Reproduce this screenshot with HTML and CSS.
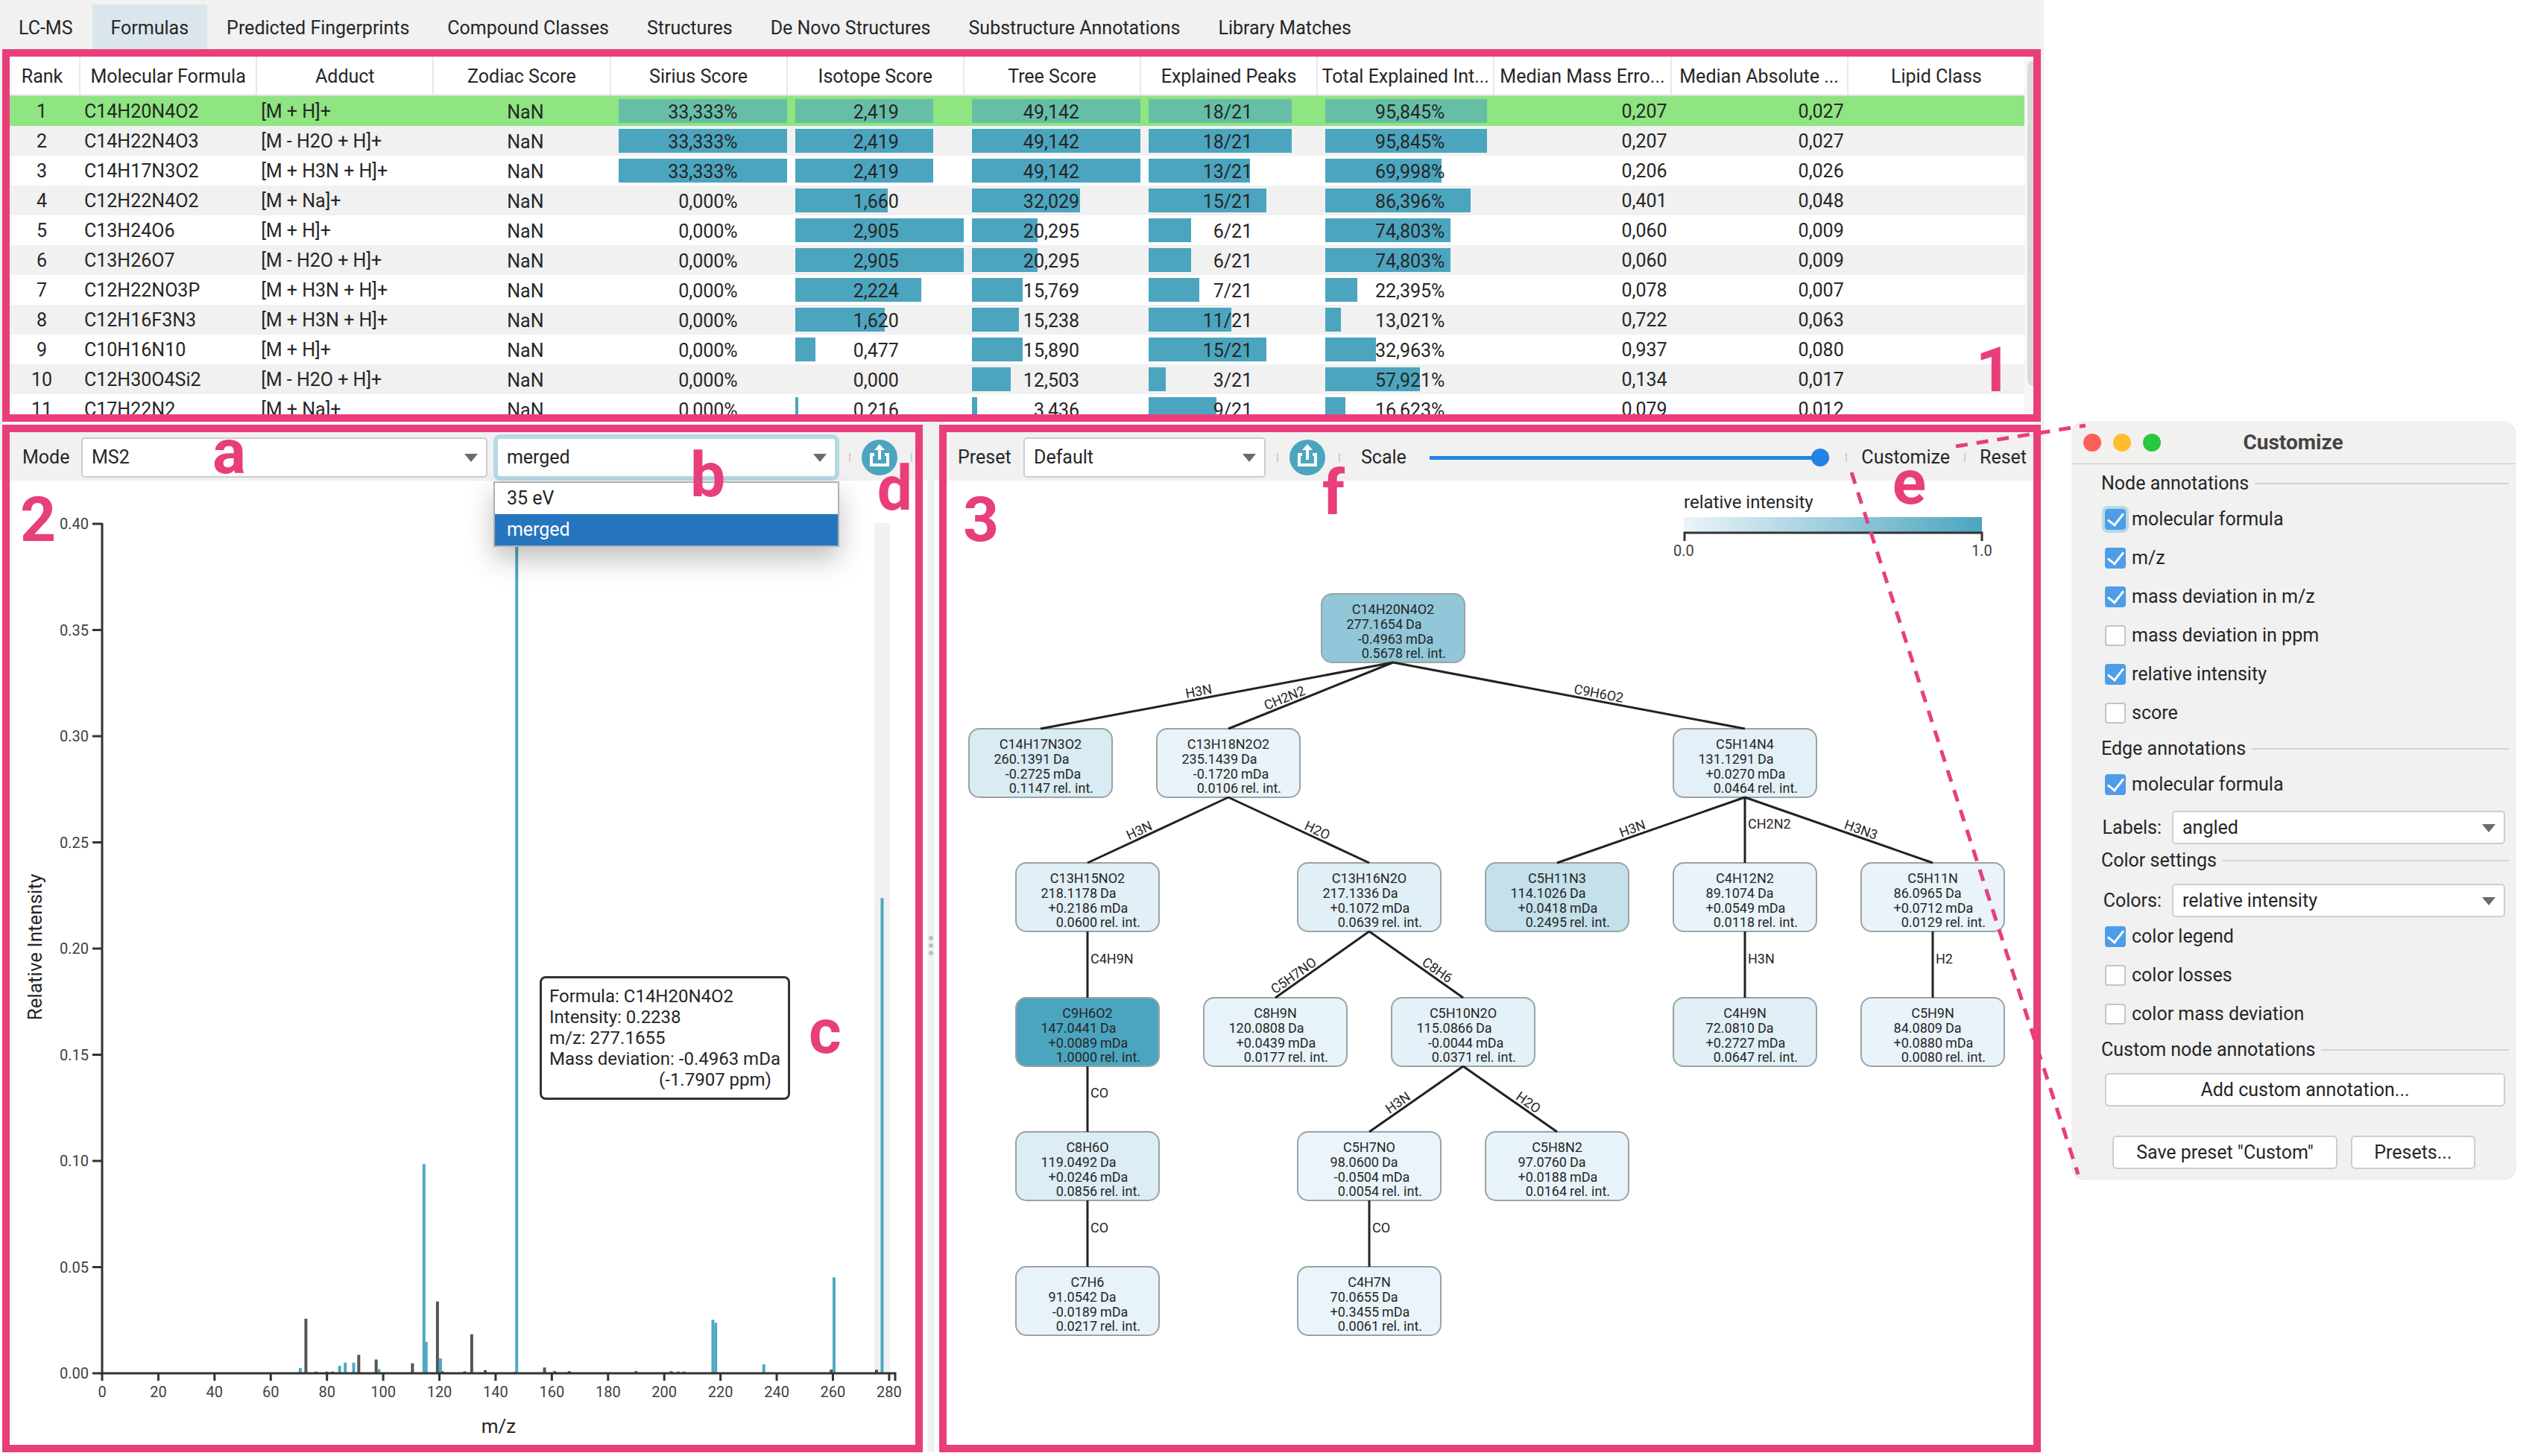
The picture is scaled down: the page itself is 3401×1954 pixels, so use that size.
FILE: index.html
```html
<!DOCTYPE html>
<html lang="en">
<head>
<meta charset="utf-8">
<title>Formulas</title>
<link rel="stylesheet" href="styles.css">
</head>
<body>
<div class="stage">
  <main class="app">
    <nav class="tabs">
      <button class="tab">LC-MS</button>
      <button class="tab tab-active">Formulas</button>
      <button class="tab">Predicted Fingerprints</button>
      <button class="tab">Compound Classes</button>
      <button class="tab">Structures</button>
      <button class="tab">De Novo Structures</button>
      <button class="tab">Substructure Annotations</button>
      <button class="tab">Library Matches</button>
    </nav>

    <section class="panel panel-table">
      <table class="formulas">
        <thead>
          <tr>
            <th class="col-rank">Rank</th><th>Molecular Formula</th><th>Adduct</th><th>Zodiac Score</th>
            <th>Sirius Score</th><th>Isotope Score</th><th>Tree Score</th><th>Explained Peaks</th>
            <th>Total Explained Int...</th><th>Median Mass Erro...</th><th>Median Absolute ...</th><th>Lipid Class</th>
          </tr>
        </thead>
        <tbody id="rows"></tbody>
      </table>
      <div class="scroll"><div class="scroll-thumb"></div></div>
      <span class="mark mark-1">1</span>
    </section>

    <div class="lower">
      <section class="panel">
        <div class="toolbar">
          <label for="mode">Mode</label>
          <span class="select select-mode"><select id="mode"><option>MS2</option></select></span>
          <span class="select select-energy">
            <select id="energy" aria-label="Collision energy"><option>merged</option><option>35 eV</option></select>
            <ul class="menu">
              <li>35 eV</li>
              <li class="menu-active">merged</li>
            </ul>
          </span>
          <span class="sep"></span>
          <button class="share" aria-label="Export spectrum">
            <svg viewBox="0 0 48 48"><circle cx="24" cy="24" r="24" fill="#4ca5bf"/><path d="M17 20H13V34H35V20H31M24 12V27" fill="none" stroke="#fff" stroke-width="4"/><path d="M24 6L31 14H17Z" fill="#fff"/></svg>
          </button>
          <span class="sep"></span>
        </div>
        <div class="plot">
          <svg id="spectrum" viewBox="0 0 1215 1294" role="img" aria-label="Mass spectrum"></svg>
          <div class="tip">Formula: C14H20N4O2<br>Intensity: 0.2238<br>m/z: 277.1655<br>Mass deviation: -0.4963 mDa<span class="tip-ppm">(-1.7907 ppm)</span></div>
        </div>
        <span class="mark mark-2">2</span>
        <span class="mark mark-a">a</span>
        <span class="mark mark-b">b</span>
        <span class="mark mark-c">c</span>
        <span class="mark mark-d">d</span>
      </section>

      <div class="divider"><i></i><i></i><i></i></div>

      <section class="panel">
        <div class="toolbar toolbar-tree">
          <label for="preset">Preset</label>
          <span class="select select-preset"><select id="preset"><option>Default</option></select></span>
          <span class="sep"></span>
          <button class="share" aria-label="Export tree">
            <svg viewBox="0 0 48 48"><circle cx="24" cy="24" r="24" fill="#4ca5bf"/><path d="M17 20H13V34H35V20H31M24 12V27" fill="none" stroke="#fff" stroke-width="4"/><path d="M24 6L31 14H17Z" fill="#fff"/></svg>
          </button>
          <span class="sep"></span>
          <label class="scale-label" for="scale">Scale</label>
          <input class="scale" id="scale" type="range" min="0" max="100" value="100">
          <span class="sep"></span>
          <button class="text-button">Customize</button>
          <span class="sep"></span>
          <button class="text-button">Reset</button>
        </div>
        <svg id="tree" viewBox="0 0 1458 1294" role="img" aria-label="Fragmentation tree"></svg>
        <span class="mark mark-3">3</span>
        <span class="mark mark-f">f</span>
        <span class="mark mark-e">e</span>
      </section>
    </div>
  </main>

  <aside class="dialog">
    <header class="titlebar">
      <span class="light light-close"></span><span class="light light-min"></span><span class="light light-max"></span>
      <h1>Customize</h1>
    </header>
    <div class="form">
      <h2>Node annotations</h2>
      <label class="check"><input class="focused" type="checkbox" checked>molecular formula</label>
      <label class="check"><input type="checkbox" checked>m/z</label>
      <label class="check"><input type="checkbox" checked>mass deviation in m/z</label>
      <label class="check"><input type="checkbox">mass deviation in ppm</label>
      <label class="check"><input type="checkbox" checked>relative intensity</label>
      <label class="check"><input type="checkbox">score</label>
      <h2>Edge annotations</h2>
      <label class="check"><input type="checkbox" checked>molecular formula</label>
      <div class="field"><label for="labels">Labels:</label><span class="select"><select id="labels"><option>angled</option></select></span></div>
      <h2>Color settings</h2>
      <div class="field"><label for="colors">Colors:</label><span class="select"><select id="colors"><option>relative intensity</option></select></span></div>
      <label class="check"><input type="checkbox" checked>color legend</label>
      <label class="check"><input type="checkbox">color losses</label>
      <label class="check"><input type="checkbox">color mass deviation</label>
      <h2>Custom node annotations</h2>
      <button class="button">Add custom annotation...</button>
      <div class="actions">
        <button class="button button-save">Save preset "Custom"</button>
        <button class="button button-presets">Presets...</button>
      </div>
    </div>
  </aside>

  <svg class="callout" viewBox="0 0 200 1020" aria-hidden="true"><path d="M24 39L198 11M-116 74L188 1016" fill="none" stroke="#e83e7b" stroke-width="5" stroke-dasharray="16 12"/></svg>
</div>
<script src="app.js"></script>
</body>
</html>
```
FILE: styles.css
```css
* { box-sizing: border-box; }

body {
  margin: 0;
  background: #fff;
  color: #262626;
  font: 25px/30px Roboto, "Liberation Sans", sans-serif;
}

button, select, input { font: inherit; color: inherit; margin: 0; }
button { border: 0; background: none; padding: 0; }

.stage {
  position: relative;
  display: grid;
  grid-template-columns: 1fr 595px;
  column-gap: 38px;
  padding-right: 26px;
  align-items: start;
}

/* main window */
.app { padding: 0 4px 4px 3px; background: linear-gradient(#f1f1f1 645px, #fff 645px); }

.tabs { display: flex; gap: 1px; padding-top: 6px; }
.tabs .tab:first-child { margin-left: -3px; }
.tab { height: 60px; padding: 4px 25px 0; white-space: nowrap; line-height: 56px; }
.tab-active { background: #dae6eb; }

.panel { position: relative; border: 10px solid #e83e7b; background: #fff; min-width: 0; }
.panel-table { height: 500px; overflow: hidden; padding-right: 12px; }

.formulas { width: 100%; border-collapse: collapse; table-layout: fixed; }
.formulas th {
  height: 52px;
  padding: 3px 0 0;
  font-weight: 400;
  white-space: nowrap;
  border-right: 2px solid #e8e8e8;
  border-bottom: 2px solid #dcdcdc;
}
.formulas th:last-child { border-right: 0; }
.formulas .col-rank { width: 94px; padding-right: 6px; }
.formulas td { height: 40px; padding: 2px 5px 0 6px; white-space: nowrap; }
.formulas tbody tr:nth-child(even) { background: #f1f1f1; }
.formulas tbody tr:first-child { background: #8fe581; }
.formulas td:first-child, .formulas td.nan { text-align: center; }
.formulas td:first-child { padding-right: 14px; }
.formulas td.nan { padding: 4px 0 0 10px; }
.formulas td.num { text-align: right; }
.formulas td.meter { padding: 4px 0 4px 11px; }
.meter-box { position: relative; height: 32px; line-height: 36px; text-align: right; }
.meter-bar { position: absolute; left: 0; top: 0; height: 32px; background: #4ca5bf; }
.formulas tbody tr:first-child .meter-bar { background: #66bfa5; }
.meter-text { position: relative; }
.pad-percent { padding-right: 66px; }
.pad-tree { padding-right: 82px; }
.pad-score { padding-right: 87px; }

.scroll { position: absolute; right: 0; top: 0; width: 12px; height: 100%; background: #f6f6f6; padding: 6px 0 38px 4px; }
.scroll-thumb { height: 100%; border-radius: 8px 0 0 8px; background: #dadada; }

.lower { display: grid; grid-template-columns: 1235fr 10px 1478fr; column-gap: 6px; margin-top: 4px; }
.divider { background: #f1f1f1; display: flex; flex-direction: column; justify-content: center; align-items: center; gap: 4px; padding-top: 18px; }
.divider i { width: 6px; height: 6px; border-radius: 50%; background: #bdbdbd; }

.toolbar { display: flex; align-items: center; height: 65px; padding: 3px 4px 0 17px; background: #f1f1f1; }
.toolbar label { width: 79px; }
.toolbar-tree { padding: 3px 9px 0 15px; }
.toolbar-tree label { width: 88px; }
.toolbar .scale-label { width: 92px; margin-left: 28px; }
.text-button { margin: 0 19px; }
.text-button:last-child { margin-right: 0; }
.sep { width: 2px; height: 12px; background: #cfcfcf; }

.select { position: relative; display: block; flex: 1; }
.select select {
  display: block;
  width: 100%;
  height: 54px;
  padding: 0 12px;
  border: 2px solid #cdcdcd;
  border-radius: 5px;
  background: #fff;
  appearance: none;
}
.select::after {
  content: "";
  position: absolute;
  right: 13px;
  top: 50%;
  margin-top: -5px;
  border: 9px solid transparent;
  border-top: 11px solid #6b6b6b;
  border-bottom: 0;
  pointer-events: none;
}
.select-mode { flex: 546; }
.select-energy { flex: 457; margin: 0 17px 0 12px; }
.select-energy select { border-color: #b5dae6; box-shadow: 0 0 0 4px #b5dae6; }
.select-preset { flex: none; width: 325px; margin-right: 15px; }

.menu {
  position: absolute;
  z-index: 2;
  left: -4px;
  right: -4px;
  top: 59px;
  margin: 0;
  padding: 0;
  list-style: none;
  border: 2px solid #b0b0b0;
  background: #fff;
  box-shadow: 0 16px 36px rgba(0, 0, 0, 0.25);
}
.menu li { height: 42px; padding: 0 16px; line-height: 42px; }
.menu-active { background: #2675bf; color: #fff; }

.share { width: 48px; height: 48px; margin: 0 18px 0 15px; flex: none; }
.share svg { display: block; }

.scale { flex: 1; height: 28px; margin-right: 22px; background: none; appearance: none; }
.scale::-webkit-slider-runnable-track { height: 5px; background: #2383e2; }
.scale::-webkit-slider-thumb { appearance: none; width: 24px; height: 24px; margin-top: -10px; border-radius: 50%; background: #2383e2; }

/* diagrams */
.plot { position: relative; }
#spectrum, #tree { display: block; width: 100%; height: auto; }
.axis { stroke: #333; stroke-width: 3; fill: none; }
.tick { font-size: 20px; fill: #404040; }
.axis-title { font-size: 26px; fill: #262626; text-anchor: middle; }
.end { text-anchor: end; }
.mid { text-anchor: middle; }
.small { font-size: 18px; fill: #262626; }
.legend-title { font-size: 24px; fill: #262626; }
.edge { stroke: #222; stroke-width: 3; }
.node { stroke: #9aa3a6; stroke-width: 2; }
.tip {
  position: absolute;
  left: 711px;
  top: 665px;
  padding: 10px;
  border: 3px solid #333;
  border-radius: 8px;
  background: #fff;
  font-size: 24px;
  line-height: 28px;
  white-space: nowrap;
}
.tip-ppm { display: block; padding: 0 12px; text-align: right; }

/* region letters */
.mark { position: absolute; z-index: 3; font-weight: 700; font-size: 84px; line-height: 84px; color: #e83e7b; }
.mark-1 { right: 29px; top: 379px; }
.mark-2 { left: 14px; top: 76px; }
.mark-3 { left: 22px; top: 76px; }
.mark-a { left: 272px; top: -15px; }
.mark-b { left: 913px; top: 16px; }
.mark-c { left: 1072px; top: 763px; }
.mark-d { right: 4px; top: 34px; }
.mark-e { right: 144px; top: 26px; }
.mark-f { left: 504px; top: 40px; }

/* dialog */
.dialog {
  margin-top: 566px;
  border-radius: 17px;
  background: #f1f1f1;
  box-shadow: 0 0 1px #888;
  overflow: hidden;
}
.titlebar { display: flex; align-items: center; gap: 16px; height: 57px; padding: 0 15px; border-bottom: 1px solid #c6c6c6; background: #f3f1ef; }
.light { width: 24px; height: 24px; border-radius: 50%; }
.light-close { background: #fe5f57; }
.light-min { background: #febc2e; }
.light-max { background: #28c840; }
.titlebar h1 { flex: 1; margin: 0 122px 0 0; text-align: center; font-size: 28px; line-height: 32px; color: #454545; }
.form { display: flex; flex-direction: column; padding: 4px 14px 14px 44px; }
.form h2 { display: flex; align-items: center; gap: 8px; height: 44px; margin: 0 -5px 0 -5px; font-size: 25px; font-weight: 400; }
.form h2::after { content: ""; flex: 1; height: 2px; background: #d3d3d3; }
.check { display: flex; align-items: center; gap: 8px; height: 52px; }
.check input {
  width: 28px;
  height: 28px;
  border: 2px solid #c4c4c4;
  border-radius: 4px;
  background: #fff;
  appearance: none;
  display: grid;
  place-items: center;
}
.check input:checked { background: #4f9de8; border-color: #4f9de8; }
.check input:checked::after { content: ""; width: 10px; height: 18px; margin-top: -5px; border: solid #fff; border-width: 0 3px 3px 0; transform: rotate(38deg); }
.check .focused { outline: 4px solid #b5dae6; }
.field { display: flex; align-items: center; margin: 9px 0 0 -5px; }
.field label { width: 95px; padding-right: 14px; text-align: right; }
.field .select select { height: 45px; }
.button { height: 45px; border: 2px solid #cdcdcd; border-radius: 6px; background: #fff; white-space: nowrap; }
.form > .button { margin-top: 9px; }
.actions { display: flex; gap: 18px; margin: 39px 40px 0 10px; }
.button-save { flex: 303; }
.button-presets { flex: 166; }

.callout { position: absolute; right: 601px; top: 560px; width: 200px; height: 1020px; overflow: visible; }
```
FILE: app.js
```js
// Formula candidates: rank, formula, adduct, then [text, bar share in %] for every metered score.
const candidates = [
  [1, "C14H20N4O2", "[M + H]+", ["33,333%", 100], ["2,419", 82], ["49,142", 100], ["18/21", 85], ["95,845%", 96], "0,207", "0,027"],
  [2, "C14H22N4O3", "[M - H2O + H]+", ["33,333%", 100], ["2,419", 82], ["49,142", 100], ["18/21", 85], ["95,845%", 96], "0,207", "0,027"],
  [3, "C14H17N3O2", "[M + H3N + H]+", ["33,333%", 100], ["2,419", 82], ["49,142", 100], ["13/21", 60], ["69,998%", 69], "0,206", "0,026"],
  [4, "C12H22N4O2", "[M + Na]+", ["0,000%", 0], ["1,660", 55], ["32,029", 64], ["15/21", 70], ["86,396%", 86], "0,401", "0,048"],
  [5, "C13H24O6", "[M + H]+", ["0,000%", 0], ["2,905", 100], ["20,295", 39], ["6/21", 25], ["74,803%", 74], "0,060", "0,009"],
  [6, "C13H26O7", "[M - H2O + H]+", ["0,000%", 0], ["2,905", 100], ["20,295", 39], ["6/21", 25], ["74,803%", 74], "0,060", "0,009"],
  [7, "C12H22NO3P", "[M + H3N + H]+", ["0,000%", 0], ["2,224", 75], ["15,769", 30], ["7/21", 30], ["22,395%", 19], "0,078", "0,007"],
  [8, "C12H16F3N3", "[M + H3N + H]+", ["0,000%", 0], ["1,620", 53], ["15,238", 28], ["11/21", 49], ["13,021%", 9], "0,722", "0,063"],
  [9, "C10H16N10", "[M + H]+", ["0,000%", 0], ["0,477", 12], ["15,890", 30], ["15/21", 70], ["32,963%", 30], "0,937", "0,080"],
  [10, "C12H30O4Si2", "[M - H2O + H]+", ["0,000%", 0], ["0,000", 0], ["12,503", 23], ["3/21", 10], ["57,921%", 56], "0,134", "0,017"],
  [11, "C17H22N2", "[M + Na]+", ["0,000%", 0], ["0,216", 2], ["3,436", 3], ["9/21", 40], ["16,623%", 12], "0,079", "0,012"]
];
const pads = ["pad-percent", "pad-score", "pad-tree", "pad-score", "pad-percent"];

document.getElementById("rows").innerHTML = candidates.map(c => {
  const meters = c.slice(3, 8).map(([text, share], i) =>
    `<td class="meter"><div class="meter-box ${pads[i]}"><div class="meter-bar" style="width:${share}%"></div><span class="meter-text">${text}</span></div></td>`).join("");
  return `<tr><td>${c[0]}</td><td>${c[1]}</td><td>${c[2]}</td><td class="nan">NaN</td>${meters}<td class="num">${c[8]}</td><td class="num">${c[9]}</td><td></td></tr>`;
}).join("");

// Spectrum
const X0 = 124, Y0 = 1198;
const sx = mz => X0 + mz * 3.771;
const sy = v => Y0 - v * 2850;
let s = `<rect x="1160" y="57" width="21" height="${Y0 - 57}" fill="#f1f1f1"/>`;
const matched = [[70.5, .0025], [84.5, .0035], [86.5, .005], [89.5, .005], [98.5, .002], [114.5, .0985], [115.3, .0148], [120.4, .007],
  [147.5, .4], [217.3, .0252], [218.3, .0238], [235.4, .0042], [260.4, .0452], [277.5, .2238]];
const unmatched = [[72.5, .0257], [91.3, .0087], [97.5, .0065], [110.4, .0047], [119.3, .0338], [131.5, .0184], [136.3, .0015],
  [157.4, .0027], [166.2, .001], [259.4, .0018], [275.5, .0017], [76, .0008], [80, .0008], [82, .0008], [121, .001], [129, .0009],
  [147, .0007], [161, .001], [190, .001], [202.5, .001], [205, .0008], [207, .0008]];
const bar = color => ([mz, v]) => `<line x1="${sx(mz)}" x2="${sx(mz)}" y1="${Y0}" y2="${sy(v)}" stroke="${color}" stroke-width="4"/>`;
s += unmatched.map(bar("#555")).join("") + matched.map(bar("#4fa9c2")).join("");
s += `<path class="axis" d="M${X0} 57V${Y0}H1188V1208"/>`;
for (let i = 0; i <= 8; i++) {
  const y = sy(i * .05);
  s += `<path class="axis" d="M111 ${y}H${X0}"/><text class="tick end" x="106" y="${y + 7}">${(i * .05).toFixed(2)}</text>`;
}
for (let mz = 0; mz <= 280; mz += 20) {
  s += `<path class="axis" d="M${sx(mz)} ${Y0}V1208"/><text class="tick mid" x="${sx(mz)}" y="1230">${mz}</text>`;
}
s += `<text class="axis-title" x="656" y="1278">m/z</text>`;
s += `<text class="axis-title" transform="translate(43 626) rotate(-90)">Relative Intensity</text>`;
document.getElementById("spectrum").innerHTML = s;

// Fragmentation tree: id, centre x, level, m/z, mass deviation, intensity, parent, loss
const nodes = [
  ["C14H20N4O2", 599, 0, "277.1654", "-0.4963", "0.5678"],
  ["C14H17N3O2", 126, 1, "260.1391", "-0.2725", "0.1147", 0, "H3N"],
  ["C13H18N2O2", 378, 1, "235.1439", "-0.1720", "0.0106", 0, "CH2N2"],
  ["C5H14N4", 1071, 1, "131.1291", "+0.0270", "0.0464", 0, "C9H6O2"],
  ["C13H15NO2", 189, 2, "218.1178", "+0.2186", "0.0600", 2, "H3N"],
  ["C13H16N2O", 567, 2, "217.1336", "+0.1072", "0.0639", 2, "H2O"],
  ["C5H11N3", 819, 2, "114.1026", "+0.0418", "0.2495", 3, "H3N"],
  ["C4H12N2", 1071, 2, "89.1074", "+0.0549", "0.0118", 3, "CH2N2"],
  ["C5H11N", 1323, 2, "86.0965", "+0.0712", "0.0129", 3, "H3N3"],
  ["C9H6O2", 189, 3, "147.0441", "+0.0089", "1.0000", 4, "C4H9N"],
  ["C8H9N", 441, 3, "120.0808", "+0.0439", "0.0177", 5, "C5H7NO"],
  ["C5H10N2O", 693, 3, "115.0866", "-0.0044", "0.0371", 5, "C8H6"],
  ["C4H9N", 1071, 3, "72.0810", "+0.2727", "0.0647", 7, "H3N"],
  ["C5H9N", 1323, 3, "84.0809", "+0.0880", "0.0080", 8, "H2"],
  ["C8H6O", 189, 4, "119.0492", "+0.0246", "0.0856", 9, "CO"],
  ["C5H7NO", 567, 4, "98.0600", "-0.0504", "0.0054", 11, "H3N"],
  ["C5H8N2", 819, 4, "97.0760", "+0.0188", "0.0164", 11, "H2O"],
  ["C7H6", 189, 5, "91.0542", "-0.0189", "0.0217", 14, "CO"],
  ["C4H7N", 567, 5, "70.0655", "+0.3455", "0.0061", 15, "CO"]
];
const levelY = level => 152 + Math.round(level * 180.5);
const W = 192, H = 92;
const low = [235, 244, 250], high = [76, 165, 191];
const tint = v => `rgb(${low.map((c, i) => Math.round(c + (high[i] - c) * v)).join(",")})`;

let t = `<defs><linearGradient id="ramp"><stop offset="0" stop-color="${tint(0)}"/><stop offset="1" stop-color="${tint(1)}"/></linearGradient></defs>
<text class="legend-title" x="989" y="37">relative intensity</text>
<rect x="989" y="49" width="400" height="20" fill="url(#ramp)"/>
<path class="axis" d="M990 81V70H1389V81"/>
<text class="tick mid" x="989" y="101">0.0</text><text class="tick mid" x="1389" y="101">1.0</text>`;
for (const [name, x, level, mz, dev, int] of nodes) {
  const y = levelY(level);
  t += `<rect class="node" x="${x - W / 2}" y="${y}" width="${W}" height="${H}" rx="14" fill="${tint(+int)}"/>
<text class="small mid" x="${x}" y="${y + 27}">${name}</text>`;
  [[mz, "Da"], [dev, "mDa"], [int, "rel. int."]].forEach(([value, unit], i) => {
    t += `<text class="small" y="${y + 47 + Math.round(i * 19.5)}"><tspan class="end" x="${x + 13}">${value}</tspan><tspan x="${x + 17}">${unit}</tspan></text>`;
  });
}
for (const [, x, level, , , , parent, loss] of nodes) {
  if (parent === undefined) continue;
  const px = nodes[parent][1], y1 = levelY(level - 1) + H, y2 = levelY(level);
  const mx = (x + px) / 2, my = (y1 + y2) / 2;
  t += `<line class="edge" x1="${px}" y1="${y1}" x2="${x}" y2="${y2}"/>`;
  if (x === px) {
    t += `<text class="small" x="${mx + 4}" y="${my - 2}">${loss}</text>`;
  } else {
    const left = x < px;
    const angle = Math.atan2(left ? y1 - y2 : y2 - y1, Math.abs(x - px)) * 180 / Math.PI;
    t += `<text class="small ${left ? "end" : ""}" transform="translate(${mx} ${my}) rotate(${angle.toFixed(2)})" x="${left ? -5 : 5}" y="-4">${loss}</text>`;
  }
}
document.getElementById("tree").innerHTML = t;
```
